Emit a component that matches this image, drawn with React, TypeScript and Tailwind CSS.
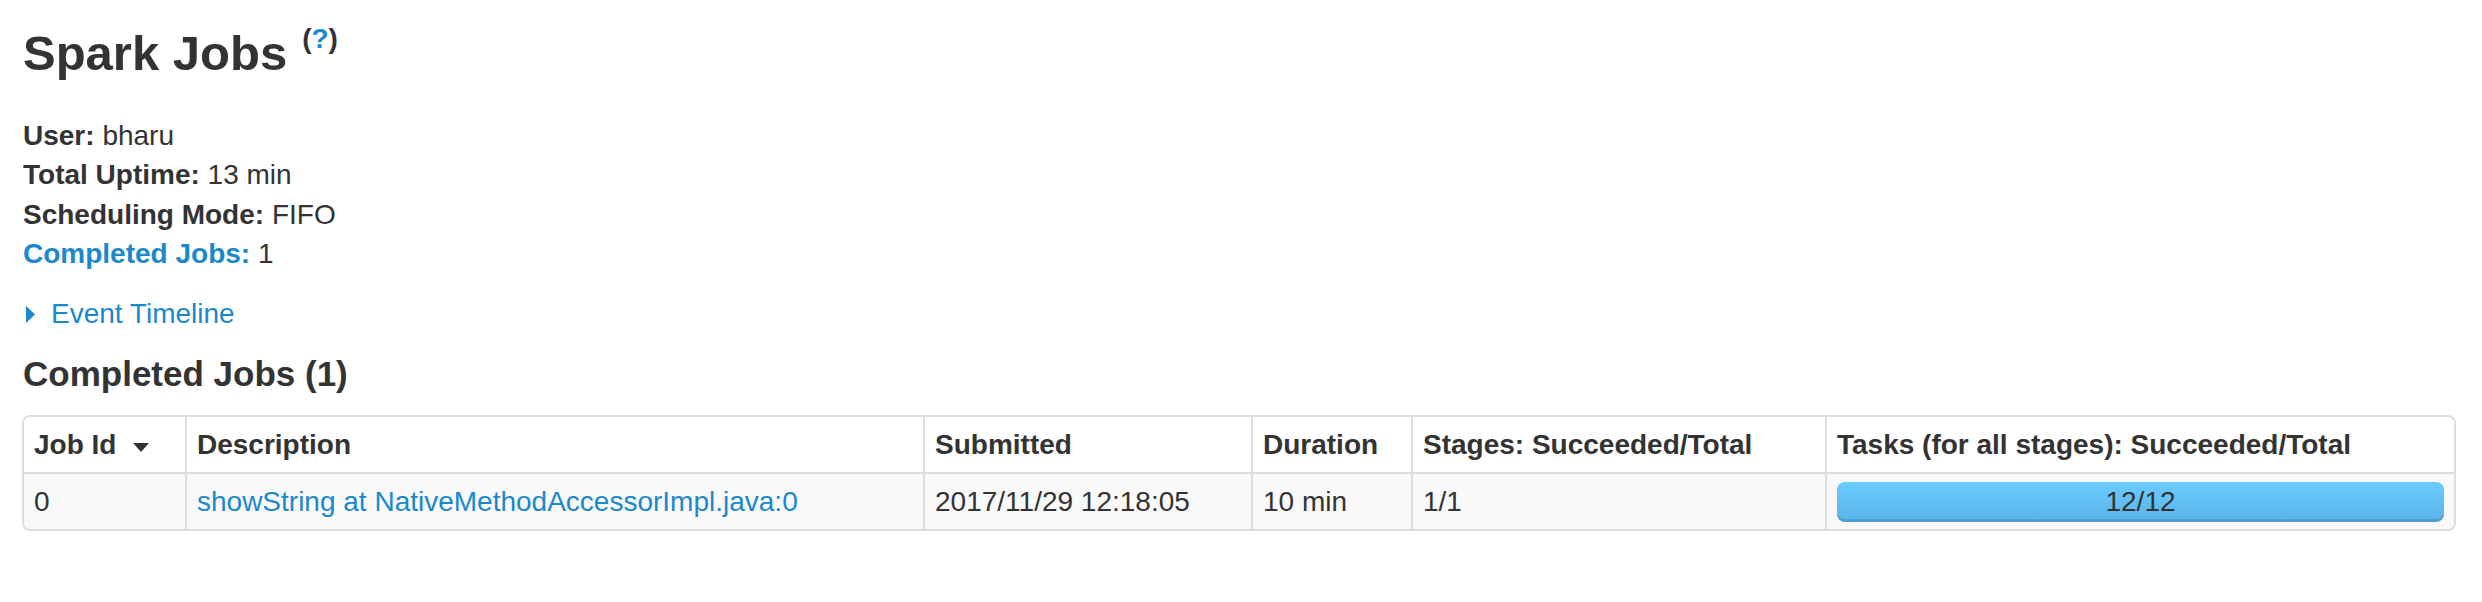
const columns = [
  { label: 'Job Id', width: 'w-[161px]', sort: true },
  { label: 'Description', width: 'w-[738px]' },
  { label: 'Submitted', width: 'w-[328px]' },
  { label: 'Duration', width: 'w-[160px]' },
  { label: 'Stages: Succeeded/Total', width: 'w-[414px]' },
  { label: 'Tasks (for all stages): Succeeded/Total', width: 'w-[629px]' },
];

const summary = [
  { label: 'User:', value: 'bharu' },
  { label: 'Total Uptime:', value: '13 min' },
  { label: 'Scheduling Mode:', value: 'FIFO' },
  { label: 'Completed Jobs:', value: '1', link: true },
];

const cell = 'px-[10px] py-[8px] leading-[39px] whitespace-nowrap';

const App = () => {
  return (
    <div className="min-h-screen bg-white text-[#333333] font-['Liberation_Sans',Arial,sans-serif] pl-[23px] pt-[25px]">
      {/* Title */}
      <h3 className="text-[49px] font-bold leading-[56px]">
        Spark Jobs
        <span className="ml-[15px] text-[28px] leading-[20px] align-[22px]">
          (<a className="text-[#1a88cc]">?</a>)
        </span>
      </h3>

      {/* Summary */}
      <ul className="mt-[35px] text-[28px] leading-[39.3px]">
        {summary.map((s) => (
          <li key={s.label}>
            <strong className={s.link ? 'text-[#1a88cc]' : ''}>{s.label}</strong> {s.value}
          </li>
        ))}
      </ul>

      {/* Timeline toggle */}
      <div className="mt-[20.4px] text-[28px] leading-[39.3px] text-[#1a88cc]">
        <svg width="9" height="17" viewBox="0 0 9 17" className="inline-block align-baseline ml-[3px] mr-[16px]">
          <polygon points="0,0 9,8.5 0,17" fill="#1a88cc" />
        </svg>
        Event Timeline
      </div>

      <h4 className="mt-[21px] text-[35px] font-bold leading-[40px]">Completed Jobs (1)</h4>

      {/* Jobs table */}
      <div className="mt-[21px] -ml-px w-[2434px] border-2 border-[#dddddd] rounded-[8px] overflow-hidden text-[28px]">
        <div className="flex bg-white font-bold">
          {columns.map((c, i) => (
            <div key={c.label} className={`${c.width} ${cell} ${i > 0 ? 'border-l-2 border-[#dddddd]' : ''}`}>
              {c.label}
              {c.sort && (
                <svg width="16" height="9" viewBox="0 0 16 9" className="inline-block align-[2px] ml-[17px]">
                  <polygon points="0,0 16,0 8,9" fill="#333333" />
                </svg>
              )}
            </div>
          ))}
        </div>
        <div className="flex bg-[#f9f9f9] border-t-2 border-[#dddddd]">
          <div className={`w-[161px] ${cell}`}>0</div>
          <div className={`w-[738px] ${cell} border-l-2 border-[#dddddd] text-[#1a88cc]`}>
            showString at NativeMethodAccessorImpl.java:0
          </div>
          <div className={`w-[328px] ${cell} border-l-2 border-[#dddddd]`}>2017/11/29 12:18:05</div>
          <div className={`w-[160px] ${cell} border-l-2 border-[#dddddd]`}>10 min</div>
          <div className={`w-[414px] ${cell} border-l-2 border-[#dddddd]`}>1/1</div>
          <div className="w-[629px] px-[10px] pt-[8px] pb-[7px] border-l-2 border-[#dddddd]">
            <div className="h-[40px] rounded-[8px] bg-gradient-to-b from-[#6accfd] to-[#58b2eb] shadow-[inset_0_-3px_0_rgba(0,0,0,0.12)] flex items-center justify-center leading-[40px]">
              12/12
            </div>
          </div>
        </div>
      </div>
    </div>
  );
};

export default App;
